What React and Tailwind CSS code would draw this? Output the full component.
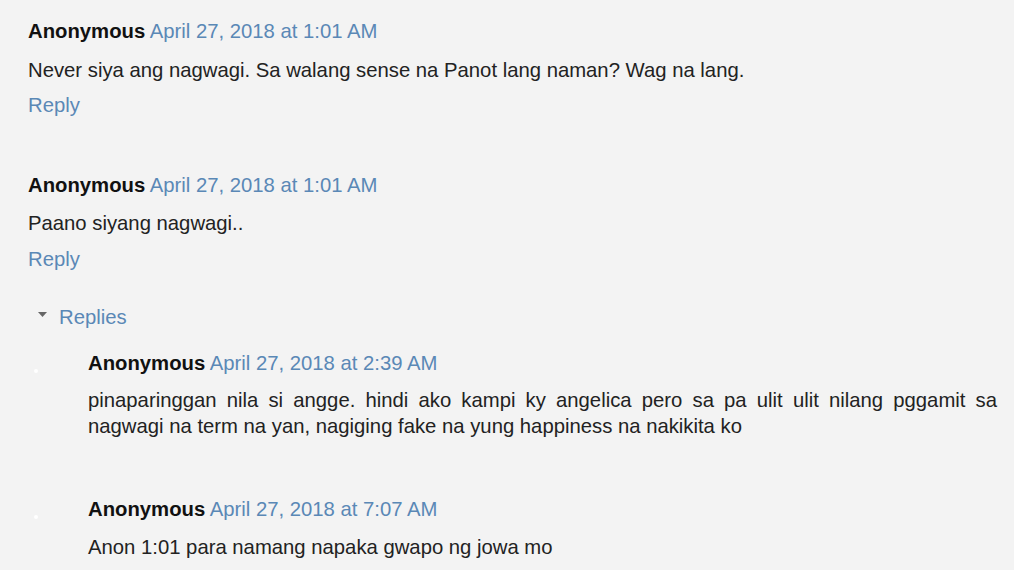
export default function App() {
  const font = { fontFamily: '"Liberation Sans", Arial, sans-serif' };
  const link = "text-[#5a88b6]";
  return (
    <div className="w-[1014px] h-[570px] overflow-hidden bg-[#f3f3f3] text-[20.3px] leading-[26px] text-[#222]" style={font}>
      <div className="pl-[28px] pr-[17px] pt-[18px]">
        {/* Comment 1 */}
        <div>
          <div>
            <span className="font-bold text-[#111]">Anonymous</span>{" "}
            <span className={link}>April 27, 2018 at 1:01 AM</span>
          </div>
          <p className="mt-[13px]">Never siya ang nagwagi. Sa walang sense na Panot lang naman? Wag na lang.</p>
          <div className={`mt-[9px] ${link}`}>Reply</div>
        </div>
        {/* Comment 2 */}
        <div className="mt-[54px]">
          <div>
            <span className="font-bold text-[#111]">Anonymous</span>{" "}
            <span className={link}>April 27, 2018 at 1:01 AM</span>
          </div>
          <p className="mt-[12px]">Paano siyang nagwagi..</p>
          <div className={`mt-[10px] ${link}`}>Reply</div>
          <div className="mt-[32px] flex items-center pl-[10px]">
            <svg width="9" height="6" viewBox="0 0 9 6" className="mr-[12px] -mt-[4px]">
              <polygon points="0,0 9,0 4.5,5" fill="#666" />
            </svg>
            <span className={link}>Replies</span>
          </div>
          {/* Reply 1 */}
          <div className="mt-[20px] flex">
            <div className="w-[60px] shrink-0 relative">
              <div className="absolute left-[6px] top-[19px] w-[4px] h-[4px] rounded-full bg-white" />
            </div>
            <div className="flex-1">
              <div>
                <span className="font-bold text-[#111]">Anonymous</span>{" "}
                <span className={link}>April 27, 2018 at 2:39 AM</span>
              </div>
              <p className="mt-[11px] text-justify">
                pinaparinggan nila si angge. hindi ako kampi ky angelica pero sa pa ulit ulit nilang pggamit sa nagwagi na term na yan, nagiging fake na yung happiness na nakikita ko
              </p>
            </div>
          </div>
          {/* Reply 2 */}
          <div className="mt-[57px] flex">
            <div className="w-[60px] shrink-0 relative">
              <div className="absolute left-[6px] top-[19px] w-[4px] h-[4px] rounded-full bg-white" />
            </div>
            <div className="flex-1">
              <div>
                <span className="font-bold text-[#111]">Anonymous</span>{" "}
                <span className={link}>April 27, 2018 at 7:07 AM</span>
              </div>
              <p className="mt-[12px]">Anon 1:01 para namang napaka gwapo ng jowa mo</p>
            </div>
          </div>
        </div>
      </div>
    </div>
  );
}
